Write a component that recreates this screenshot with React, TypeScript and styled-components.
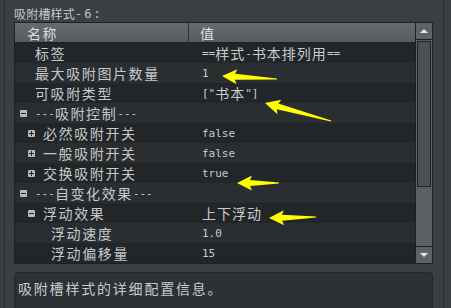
import React from "react"
import styled, { createGlobalStyle } from "styled-components"

const GlobalStyle = createGlobalStyle`
  html, body {
    margin: 0;
    padding: 0;
    background: #3c3f41;
  }
  body {
    font-family: "DejaVu Sans Mono", "Noto Sans CJK SC", monospace;
    color: #c8cacc;
  }
`

// CJK runs are drawn bigger than the latin runs, as the original app does
const HAN = /([\u2e80-\u9fff\u3000-\u303f\uff00-\uffef]+)/

type Sizes = { han: [number, number]; latin: [number, number] }

const Han = styled.span<{ $size: number; $spacing: number }>`
  font-family: "Noto Sans CJK SC", sans-serif;
  font-size: ${p => p.$size}px;
  letter-spacing: ${p => p.$spacing}px;
`

const Latin = styled.span<{ $size: number; $spacing: number }>`
  font-family: "DejaVu Sans Mono", monospace;
  font-size: ${p => p.$size}px;
  letter-spacing: ${p => p.$spacing}px;
`

const Mixed = ({ text, han, latin }: { text: string } & Sizes) => (
  <>
    {text
      .split(HAN)
      .filter(Boolean)
      .map((part, i) =>
        HAN.test(part) ? (
          <Han key={i} $size={han[0]} $spacing={han[1]}>
            {part}
          </Han>
        ) : (
          <Latin key={i} $size={latin[0]} $spacing={latin[1]}>
            {part}
          </Latin>
        )
      )}
  </>
)

const NAME: Sizes = { han: [14, 1.6], latin: [11, 0] }
const VALUE: Sizes = { han: [14, 1], latin: [11, 0] }

const Screen = styled.div`
  position: relative;
  width: 451px;
  height: 308px;
  box-sizing: border-box;
  padding: 0 7px 0 4px;
  background: #3c3f41;
  overflow: hidden;
`

const Panel = styled.div`
  height: 100%;
  box-sizing: border-box;
  border-left: 1px solid #2a2c2e;
  border-right: 1px solid #2a2c2e;
  padding: 0 10px 0 9px;
  display: flex;
  flex-direction: column;
`

const Title = styled.div`
  height: 25px;
  box-sizing: border-box;
  padding-top: 5px;
  display: flex;
  align-items: center;
  color: #c6c8ca;
  white-space: nowrap;
`

const Table = styled.div`
  display: flex;
  height: 242px;
  box-sizing: border-box;
  border: 1px solid #1e2022;
  flex-shrink: 0;
`

const Body = styled.div`
  flex: 1;
  display: flex;
  flex-direction: column;
  min-width: 0;
`

const Header = styled.div`
  display: grid;
  grid-template-columns: 174px 1fr;
  height: 19px;
  border-bottom: 1px solid #1e2022;
  background: linear-gradient(#666b6d, #575c5e);
  color: #dcdedf;
`

const HeadCell = styled.div<{ $pad: number; $divider?: boolean }>`
  display: flex;
  align-items: center;
  padding-left: ${p => p.$pad}px;
  border-right: ${p => (p.$divider ? "1px solid #2c2f31" : "none")};
  white-space: nowrap;
`

const Row = styled.div<{ $odd: boolean }>`
  display: grid;
  grid-template-columns: 174px 1fr;
  height: 20px;
  background: ${p => (p.$odd ? "#2b2e31" : "#232628")};
`

const NameCell = styled.div<{ $pad: number }>`
  display: flex;
  align-items: center;
  padding-left: ${p => p.$pad}px;
  white-space: nowrap;
  color: #c6c9cb;
`

const ValueCell = styled.div`
  display: flex;
  align-items: center;
  padding-left: 13px;
  white-space: nowrap;
  color: #c8cacc;
`

const Toggle = styled.span<{ $open: boolean }>`
  position: relative;
  width: 7px;
  height: 7px;
  margin-right: 8px;
  flex-shrink: 0;
  border-radius: 1px;
  background: #b7babc;

  &::before {
    content: "";
    position: absolute;
    left: 1px;
    right: 1px;
    top: 3px;
    height: 1px;
    background: #26292b;
  }

  &::after {
    content: "";
    display: ${p => (p.$open ? "none" : "block")};
    position: absolute;
    top: 1px;
    bottom: 1px;
    left: 3px;
    width: 1px;
    background: #26292b;
  }
`

const Scrollbar = styled.div`
  width: 16px;
  border-left: 1px solid #1e2022;
  display: flex;
  flex-direction: column;
  background: #5b6063;
`

const ScrollButton = styled.div<{ $up: boolean }>`
  height: 16px;
  flex-shrink: 0;
  display: flex;
  align-items: center;
  justify-content: center;
  background: #5e6366;
  border-top: ${p => (p.$up ? "none" : "1px solid #1e2022")};
  border-bottom: ${p => (p.$up ? "1px solid #1e2022" : "none")};

  &::after {
    content: "";
    width: 0;
    height: 0;
    border-left: 4px solid transparent;
    border-right: 4px solid transparent;
    ${p =>
      p.$up
        ? "border-bottom: 4px solid #e8e8e8;"
        : "border-top: 4px solid #e8e8e8;"}
  }
`

const Track = styled.div`
  flex: 1;
  padding: 1px 1px 0;
`

const Thumb = styled.div`
  height: 146px;
  box-sizing: border-box;
  border: 1px solid #1f2224;
  background: #4b5053;
`

const Description = styled.div`
  margin-top: 8px;
  height: 44px;
  flex-shrink: 0;
  box-sizing: border-box;
  border: 1px solid #25282a;
  border-radius: 4px;
  background: #2e3134;
  padding: 5px 3px;
  color: #c8cacc;
  white-space: nowrap;
`

const Overlay = styled.svg`
  position: absolute;
  left: 0;
  top: 0;
  pointer-events: none;
`

type Item = {
  name: string
  value?: string
  level: number
  toggle?: "open" | "closed"
}

const rows: Item[] = [
  { name: "标签", value: "==样式-书本排列用==", level: 0 },
  { name: "最大吸附图片数量", value: "1", level: 0 },
  { name: "可吸附类型", value: '["书本"]', level: 0 },
  { name: "---吸附控制---", level: 0, toggle: "open" },
  { name: "必然吸附开关", value: "false", level: 1, toggle: "closed" },
  { name: "一般吸附开关", value: "false", level: 1, toggle: "closed" },
  { name: "交换吸附开关", value: "true", level: 1, toggle: "closed" },
  { name: "---自变化效果---", level: 0, toggle: "open" },
  { name: "浮动效果", value: "上下浮动", level: 1, toggle: "open" },
  { name: "浮动速度", value: "1.0", level: 2 },
  { name: "浮动偏移量", value: "15", level: 2 },
]

// tip and tail of each yellow annotation arrow
const arrows: [number, number, number, number][] = [
  [222, 76, 277, 79],
  [265, 103, 331, 121],
  [237, 183, 279, 183],
  [269, 218, 316, 217],
]

function arrowPoints(px: number, py: number, tx: number, ty: number) {
  const dx = tx - px
  const dy = ty - py
  const len = Math.hypot(dx, dy)
  const ux = dx / len
  const uy = dy / len
  const local: [number, number][] = [
    [0, 0],
    [15, -7.5],
    [13, -3],
    [len, -0.6],
    [len, 0.6],
    [13, 3],
    [15, 7.5],
  ]
  return local
    .map(([a, b]) => `${(px + ux * a - uy * b).toFixed(1)},${(py + uy * a + ux * b).toFixed(1)}`)
    .join(" ")
}

export default function App() {
  return (
    <>
      <GlobalStyle />
      <Screen>
        <Panel>
          <Title>
            <Mixed text="吸附槽样式-6:" han={[12, 0.2]} latin={[12, 2]} />
          </Title>
          <Table>
            <Body>
              <Header>
                <HeadCell $pad={12} $divider>
                  <Mixed text="名称" {...NAME} />
                </HeadCell>
                <HeadCell $pad={11}>
                  <Mixed text="值" {...NAME} />
                </HeadCell>
              </Header>
              {rows.map((r, i) => (
                <Row key={r.name} $odd={i % 2 === 1}>
                  <NameCell $pad={r.toggle ? 5 + 8 * r.level : 20 + 8 * r.level}>
                    {r.toggle && <Toggle $open={r.toggle === "open"} />}
                    <Mixed text={r.name} {...NAME} />
                  </NameCell>
                  <ValueCell>{r.value && <Mixed text={r.value} {...VALUE} />}</ValueCell>
                </Row>
              ))}
            </Body>
            <Scrollbar>
              <ScrollButton $up />
              <Track>
                <Thumb />
              </Track>
              <ScrollButton $up={false} />
            </Scrollbar>
          </Table>
          <Description>
            <Mixed text="吸附槽样式的详细配置信息。" han={[14, 1.8]} latin={[11, 0]} />
          </Description>
        </Panel>
        <Overlay width={451} height={308} viewBox="0 0 451 308">
          {arrows.map(([px, py, tx, ty], i) => (
            <polygon key={i} points={arrowPoints(px, py, tx, ty)} fill="#ffff00" />
          ))}
        </Overlay>
      </Screen>
    </>
  )
}
